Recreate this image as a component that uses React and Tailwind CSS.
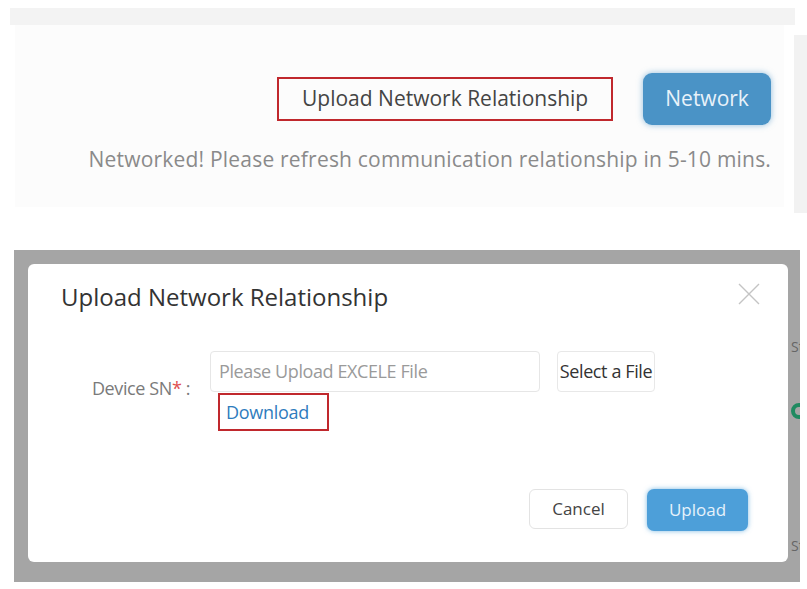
export default function App() {
  const font = { fontFamily: '"Open Sans", "Noto Sans", sans-serif' };

  return (
    <div className="w-[807px] h-[589px] bg-white overflow-hidden" style={font}>
      {/* Top: page section with the network action */}
      <div className="pt-[8px] pl-[10px]">
        <div className="w-[785px] h-[17px] bg-[#f3f3f3]" />
        <div className="flex">
          <div className="ml-[5px] w-[775px] h-[182px] bg-[#fcfcfc] flex flex-col items-end pr-[19px]">
            <div className="mt-[48px] mr-[-6px] flex items-center gap-[30px]">
              <div className="w-[336px] h-[44px] border-2 border-[#c0282d] flex items-center justify-center text-[21px] text-[#444]">
                Upload Network Relationship
              </div>
              <button className="w-[128px] h-[52px] rounded-[9px] bg-[#4a93c6] text-[#e8f2fa] text-[21px] shadow-[0_0_6px_rgba(74,147,198,0.6)]">
                Network
              </button>
            </div>
            <div className="mt-[19px] mr-[-6px] text-[21px] text-[#8a8a8a] tracking-[0.2px] whitespace-nowrap">
              Networked! Please refresh communication relationship in 5-10 mins.
            </div>
          </div>
          <div className="mt-[10px] ml-[10px] w-[13px] h-[178px] bg-[#f2f2f2]" />
        </div>
      </div>

      {/* Bottom: upload dialog */}
      <div className="mt-[37px] ml-[14px] w-[786px] h-[332px] bg-[#a5a5a5] flex pt-[14px] pl-[14px]">
        <div className="w-[760px] h-[298px] bg-white rounded-[6px] flex flex-col shrink-0">
          <div className="flex items-start justify-between pl-[33px] pr-[28px] pt-[15px]">
            <div className="text-[24px] text-[#333]">Upload Network Relationship</div>
            <svg width="22" height="22" viewBox="0 0 22 22" className="mt-[4px]" fill="none" stroke="#c4c4c4" strokeWidth="1.4">
              <path d="M1 1 L21 21 M21 1 L1 21" />
            </svg>
          </div>
          <div className="flex mt-[36px]">
            <div className="w-[162px] pt-[24px] text-right text-[18px] text-[#7a7a7a] tracking-[-0.4px] whitespace-nowrap">
              Device SN<span className="text-[#e05050]">*</span> :
            </div>
            <div className="ml-[20px] flex flex-col">
              <div className="flex gap-[17px]">
                <div className="w-[330px] h-[41px] border border-[#e6e6e6] rounded-[4px] flex items-center pl-[8px] text-[18px] text-[#9a9a9a] tracking-[-0.4px] whitespace-nowrap">
                  Please Upload EXCELE File
                </div>
                <div className="w-[98px] h-[41px] border border-[#e8e8e8] rounded-[4px] flex items-center justify-center text-[18px] text-[#333] tracking-[-0.4px] whitespace-nowrap">
                  Select a File
                </div>
              </div>
              <div className="ml-[8px] mt-[1px] w-[111px] h-[38px] border-2 border-[#c0282d] flex items-center pl-[6px] text-[18px] text-[#2f7cbd] tracking-[-0.3px]">
                Download
              </div>
            </div>
          </div>
          <div className="flex justify-end gap-[19px] pr-[40px] mt-[58px]">
            <button className="w-[99px] h-[40px] border border-[#e3e3e3] rounded-[6px] text-[17px] text-[#444]">
              Cancel
            </button>
            <button className="w-[101px] h-[42px] rounded-[7px] bg-[#4d9fd9] text-[#e6f2fb] text-[17px] shadow-[0_0_5px_rgba(77,159,217,0.7)]">
              Upload
            </button>
          </div>
        </div>
        <div className="flex flex-col pl-[3px] text-[14px] text-[#666] overflow-hidden w-[12px]">
          <span className="mt-[72px]">St</span>
          <span className="mt-[46px] w-[16px] h-[16px] rounded-full border-[4px] border-[#1f8a60]" />
          <span className="mt-[116px]">St</span>
        </div>
      </div>
    </div>
  );
}
